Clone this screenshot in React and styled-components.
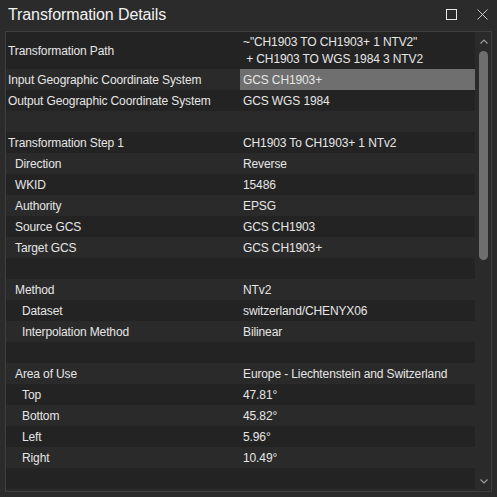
import React from 'react';
import styled, { createGlobalStyle } from 'styled-components';

const GlobalStyle = createGlobalStyle`
  html, body {
    margin: 0;
    padding: 0;
    background: #2b2b2b;
  }
  body {
    font-family: "Liberation Sans", Arial, sans-serif;
  }
`;

const Window = styled.div`
  width: 497px;
  height: 497px;
  background: #2b2b2b;
  display: flex;
  flex-direction: column;
  box-sizing: border-box;
  padding: 0 5px 5px 5px;
`;

const TitleBar = styled.div`
  height: 31px;
  display: flex;
  align-items: center;
  justify-content: space-between;
  padding: 0 4px 0 3px;
`;

const Title = styled.div`
  color: #f2f2f2;
  font-size: 16px;
  letter-spacing: -0.1px;
  padding-bottom: 2px;
`;

const Controls = styled.div`
  display: flex;
  align-items: center;
  gap: 20px;
  padding-bottom: 2px;
`;

const Panel = styled.div`
  flex: 1;
  border: 1px solid #3f3f3f;
  display: flex;
  min-height: 0;
`;

const List = styled.div`
  flex: 1;
  display: flex;
  flex-direction: column;
  padding-bottom: 2px;
`;

const Row = styled.div`
  display: grid;
  grid-template-columns: 234px 1fr;
  height: ${(p) => (p.$tall ? 37 : 21)}px;
  background: ${(p) => (p.$dark ? '#232323' : '#2a2a2a')};
  font-size: 12px;
  letter-spacing: -0.12px;
  color: #e6e6e6;
`;

const Label = styled.div`
  display: flex;
  align-items: center;
  padding-top: 1px;
  padding-left: ${(p) => 2 + p.$level * 7}px;
  white-space: nowrap;
`;

const Value = styled.div`
  display: flex;
  flex-direction: column;
  justify-content: center;
  padding-top: 1px;
  padding-left: 3px;
  white-space: nowrap;
  background: ${(p) => (p.$selected ? '#6f6f6f' : 'transparent')};
  line-height: 17px;
`;

const ScrollTrack = styled.div`
  width: 16px;
  background: #2a2a2a;
  display: flex;
  flex-direction: column;
  align-items: center;
  padding-left: 1px;
  box-sizing: border-box;
`;

const Arrow = styled.div`
  height: ${(p) => p.$h}px;
  display: flex;
  align-items: center;
  justify-content: center;
`;

const Thumb = styled.div`
  width: 9px;
  height: 209px;
  border-radius: 5px;
  background: #6e6e6e;
`;

const Spacer = styled.div`
  flex: 1;
`;

const rows = [
  { label: 'Transformation Path', level: 0, tall: true, value: ['~"CH1903 TO CH1903+ 1 NTV2"', '\u00a0+ CH1903 TO WGS 1984 3 NTV2'] },
  { label: 'Input Geographic Coordinate System', level: 0, value: 'GCS CH1903+', selected: true },
  { label: 'Output Geographic Coordinate System', level: 0, value: 'GCS WGS 1984' },
  { label: '', level: 0, value: '' },
  { label: 'Transformation Step 1', level: 0, value: 'CH1903 To CH1903+ 1 NTv2' },
  { label: 'Direction', level: 1, value: 'Reverse' },
  { label: 'WKID', level: 1, value: '15486' },
  { label: 'Authority', level: 1, value: 'EPSG' },
  { label: 'Source GCS', level: 1, value: 'GCS CH1903' },
  { label: 'Target GCS', level: 1, value: 'GCS CH1903+' },
  { label: '', level: 0, value: '' },
  { label: 'Method', level: 1, value: 'NTv2' },
  { label: 'Dataset', level: 2, value: 'switzerland/CHENYX06' },
  { label: 'Interpolation Method', level: 2, value: 'Bilinear' },
  { label: '', level: 0, value: '' },
  { label: 'Area of Use', level: 1, value: 'Europe - Liechtenstein and Switzerland' },
  { label: 'Top', level: 2, value: '47.81°' },
  { label: 'Bottom', level: 2, value: '45.82°' },
  { label: 'Left', level: 2, value: '5.96°' },
  { label: 'Right', level: 2, value: '10.49°' },
  { label: '', level: 0, value: '' },
];

const App = () => {
  return (
    <Window>
      <GlobalStyle />
      <TitleBar>
        <Title>Transformation Details</Title>
        <Controls>
          <svg width="11" height="11" viewBox="0 0 11 11">
            <rect x="0.5" y="0.5" width="10" height="10" fill="none" stroke="#e8e8e8" strokeWidth="1" />
          </svg>
          <svg width="11" height="11" viewBox="0 0 11 11">
            <path d="M0.5 0.5 L10.5 10.5 M10.5 0.5 L0.5 10.5" stroke="#d8d8d8" strokeWidth="0.9" />
          </svg>
        </Controls>
      </TitleBar>
      <Panel>
        <List>
          {rows.map((r, i) => (
            <Row key={i} $dark={i % 2 === 0} $tall={r.tall}>
              <Label $level={r.level}>{r.label}</Label>
              <Value $selected={r.selected}>
                {Array.isArray(r.value) ? r.value.map((v) => <span key={v}>{v}</span>) : r.value}
              </Value>
            </Row>
          ))}
        </List>
        <ScrollTrack>
          <Arrow $h={19}>
            <svg width="8" height="5" viewBox="0 0 8 5">
              <path d="M0.5 4.5 L4 1 L7.5 4.5" fill="none" stroke="#9c9c9c" strokeWidth="1.2" />
            </svg>
          </Arrow>
          <Thumb />
          <Spacer />
          <Arrow $h={20}>
            <svg width="8" height="5" viewBox="0 0 8 5">
              <path d="M0.5 0.5 L4 4 L7.5 0.5" fill="none" stroke="#9c9c9c" strokeWidth="1.2" />
            </svg>
          </Arrow>
        </ScrollTrack>
      </Panel>
    </Window>
  );
};

export default App;
